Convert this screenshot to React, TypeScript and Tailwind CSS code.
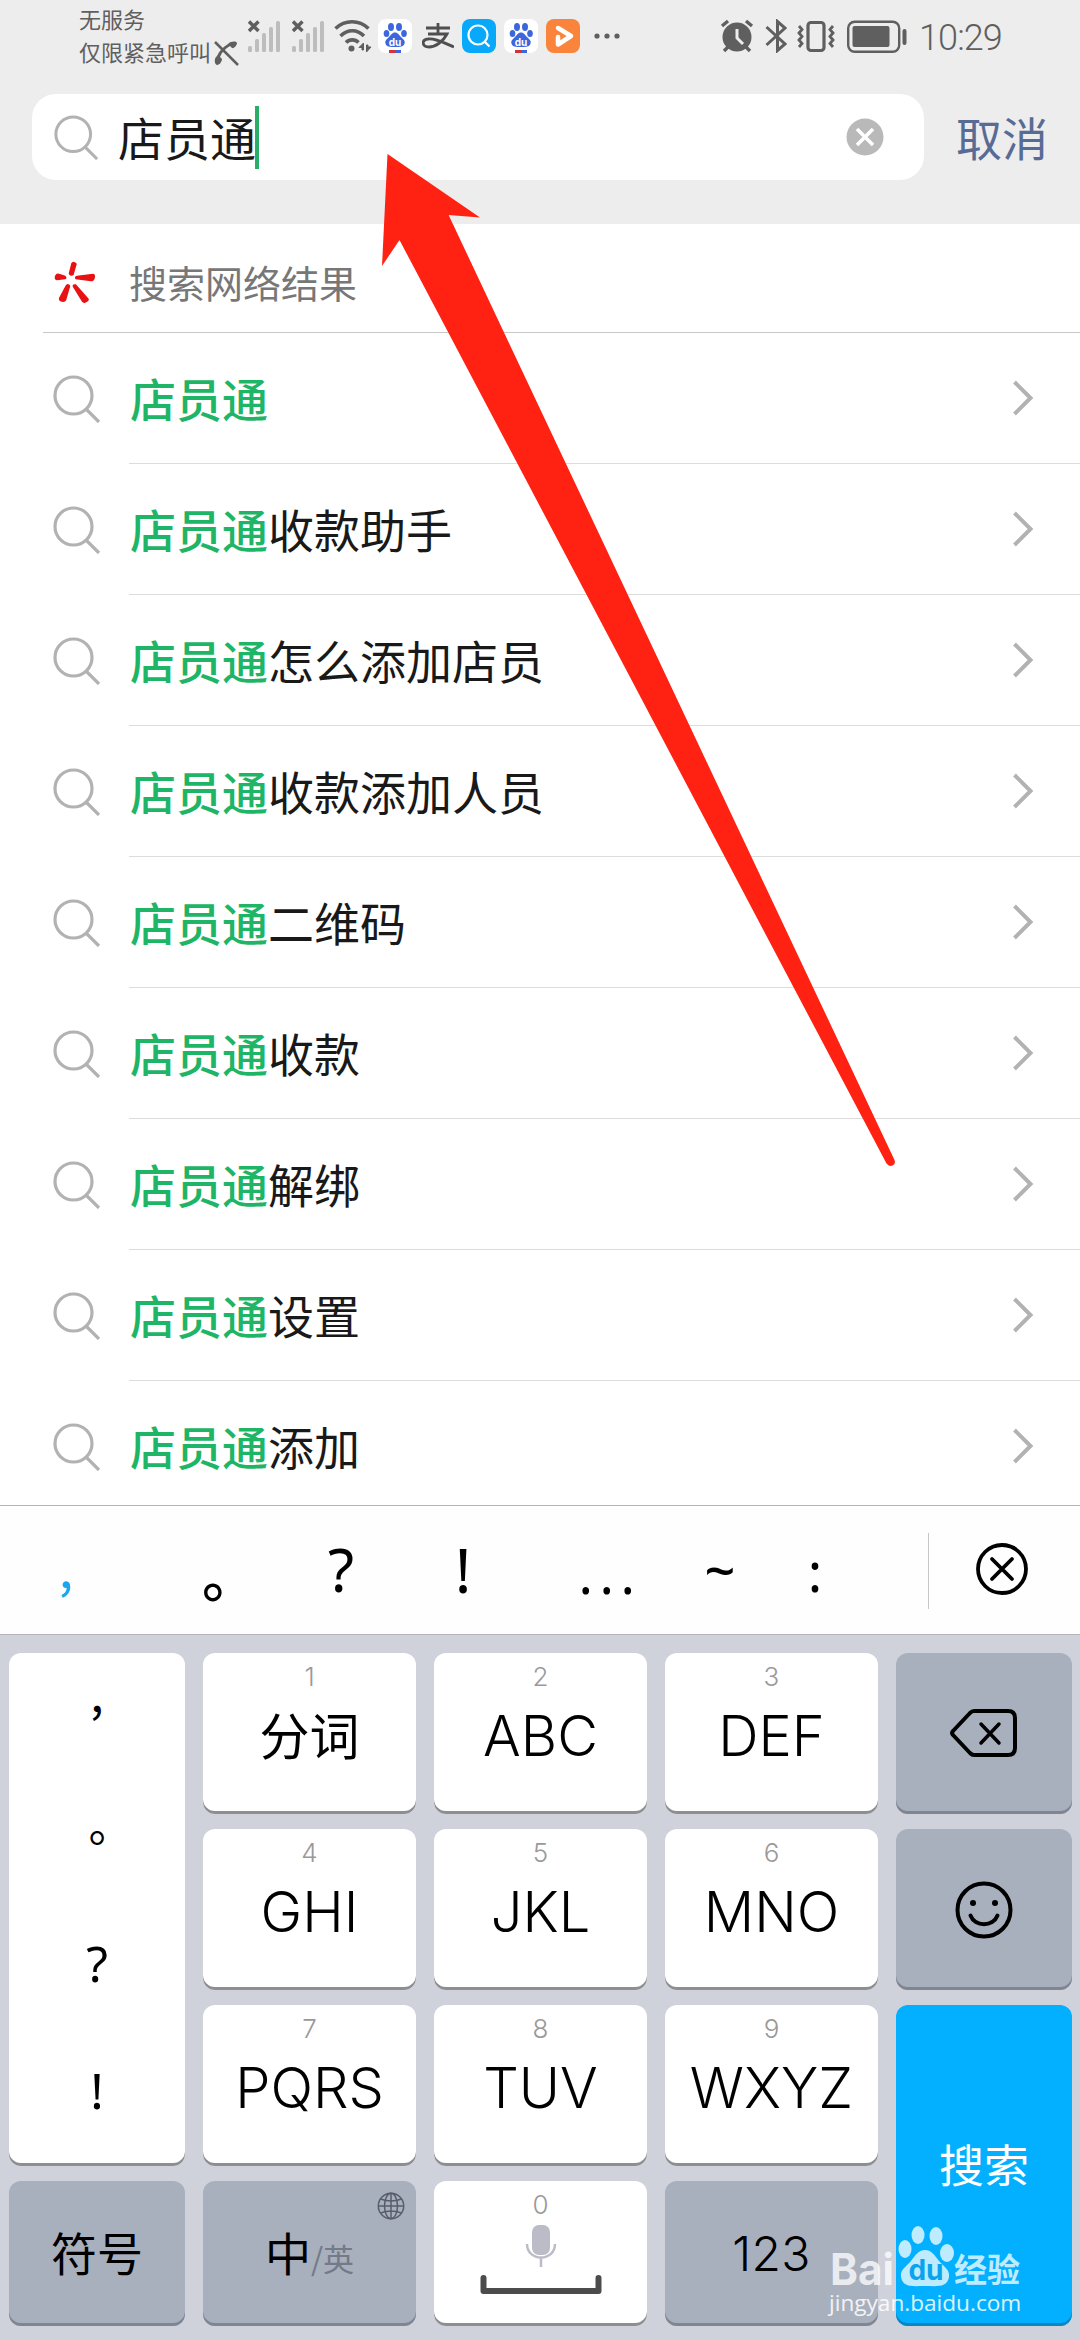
import type { ReactNode } from "react";

const results = [
  "",
  "收款助手",
  "怎么添加店员",
  "收款添加人员",
  "二维码",
  "收款",
  "解绑",
  "设置",
  "添加",
];

function SearchIcon({ className }: { className: string }) {
  return (
    <svg viewBox="0 0 48 48" fill="none" stroke="#b2b2b2" strokeWidth="3.2" className={className}>
      <circle cx="20.5" cy="20.5" r="18.5" />
      <path d="M33 34 46 47" />
    </svg>
  );
}

function Signal() {
  return (
    <svg viewBox="0 0 32 34" className="w-8 h-[34px]">
      <g fill="#bdbdbd">
        <rect x="0" y="27" width="4" height="6" rx="1.5" />
        <rect x="7" y="20" width="4" height="13" rx="1.5" />
        <rect x="14" y="14" width="4" height="19" rx="1.5" />
        <rect x="21" y="8" width="4" height="25" rx="1.5" />
        <rect x="28" y="2" width="4" height="31" rx="1.5" />
      </g>
      <path d="M1 2.500 10.500 12M10.500 2.500 1 12" stroke="#5f5f5f" strokeWidth="3.400" />
    </svg>
  );
}

function BaiduApp() {
  return (
    <svg viewBox="0 0 34 34" className="w-[34px] h-[34px]">
      <rect width="34" height="34" rx="8" fill="#fff" />
      <g fill="#3b66dc">
        <ellipse cx="13" cy="8" rx="3" ry="4" />
        <ellipse cx="21" cy="8" rx="3" ry="4" />
        <ellipse cx="8.500" cy="14.500" rx="2.800" ry="3.600" />
        <ellipse cx="26" cy="14.500" rx="2.800" ry="3.600" />
        <path d="M17 13.500c3 0 4 2.500 6 4.500s4.500 3.500 3.500 6.500c-1 3.500-4.500 3.500-9.500 3.500s-8.500 0-9.500-3.500c-1-3 1.500-4.500 3.500-6.500s3-4.500 6-4.500z" />
      </g>
      <text x="17" y="26.500" textAnchor="middle" fill="#fff" fontSize="10" fontWeight="700" fontFamily="Inter">du</text>
      <rect x="11" y="31" width="6" height="3" fill="#d2333a" />
      <rect x="17" y="31" width="6" height="3" fill="#3b66dc" />
    </svg>
  );
}

function StatusBar() {
  return (
    <div className="h-[94px] flex items-start pl-[79px] text-[#5f5f5f]">
      <div className="w-[134px] mt-[2px] text-[22px] leading-[33px] whitespace-nowrap">
        <p>无服务</p>
        <p>仅限紧急呼叫</p>
      </div>
      <svg viewBox="0 0 26 26" className="w-[26px] h-[26px] mt-10">
        <path d="M2 2 25 25" stroke="#5f5f5f" strokeWidth="2.500" />
        <path d="M15 4c3-3 8-3 9-1 0 2-3 6-5 5l-2-2C12 9 9 12 7 17l2 2c0 2-2 6-5 6-3-1-3-7 0-9C6 11 10 7 15 4z" fill="#5f5f5f" />
      </svg>
      <div className="flex mt-[19px] ml-[9px] gap-3">
        <Signal />
        <Signal />
      </div>
      <svg viewBox="0 0 38 34" className="w-[38px] h-[34px] mt-[19px] ml-[10px]" fill="none" stroke="#5f5f5f" strokeWidth="3.600">
        <path d="M1.500 9.500C11 .500 25 .500 34.500 9.500M6.500 17C13.500 10 23 10 30 17M12 23.500C15.500 20 21 20 24.500 23.500" />
        <circle cx="17.500" cy="29.500" r="3" fill="#5f5f5f" stroke="none" />
        <path d="M25 28.500 29.500 24v7h-1.500v-2.500zM37 28 32.500 33v-7h1.500v2z" strokeWidth="1" fill="#5f5f5f" />
      </svg>
      <div className="flex items-center mt-[19px] ml-[6px]">
        <BaiduApp />
        <svg viewBox="0 0 32 26" className="w-8 h-[26px] ml-[10px]" fill="none" stroke="#4f4f4f" strokeWidth="2.800">
          <path d="M4 5h24M16 0v11M6 11h19C21 19 13 24 7 24c-7 0-8-7-1-8 6-1 14 3 26 8" />
        </svg>
        <svg viewBox="0 0 34 34" className="w-[34px] h-[34px] ml-2">
          <rect width="34" height="34" rx="8" fill="#08a9fb" />
          <g fill="none" stroke="#fff" strokeWidth="2.200">
            <circle cx="16" cy="16" r="9.500" />
            <path d="m22.500 22.500 5 5" />
          </g>
        </svg>
        <div className="ml-2">
          <BaiduApp />
        </div>
        <svg viewBox="0 0 34 34" className="w-[34px] h-[34px] ml-2">
          <rect width="34" height="34" rx="8" fill="#fa843c" />
          <path d="M12 9 25 17 12 25.500V18" fill="none" stroke="#fff" strokeWidth="4.500" strokeLinejoin="round" strokeLinecap="round" />
        </svg>
        <svg viewBox="0 0 26 6" className="w-[26px] h-[6px] ml-[14px]" fill="#5f5f5f">
          <circle cx="3" cy="3" r="2.600" />
          <circle cx="13" cy="3" r="2.600" />
          <circle cx="23" cy="3" r="2.600" />
        </svg>
      </div>
      <svg viewBox="0 0 34 34" className="w-[34px] h-[34px] mt-[19px] ml-[100px]">
        <circle cx="17" cy="18" r="14.500" fill="#5f5f5f" />
        <path d="M2 7 8 2M32 7 26 2M4 32l4-4M30 32l-4-4" stroke="#5f5f5f" strokeWidth="3.400" />
        <path d="M17 10v9l6 6" fill="none" stroke="#ededed" strokeWidth="3" />
      </svg>
      <svg viewBox="0 0 22 34" className="w-[22px] h-[34px] mt-[19px] ml-[11px]" fill="none" stroke="#5f5f5f" strokeWidth="3">
        <path d="M1.500 8 20 25l-7.500 6.500V2.500L20 9 1.500 26" />
      </svg>
      <svg viewBox="0 0 38 34" className="w-[38px] h-[34px] mt-[19px] ml-[10px]" fill="none" stroke="#5f5f5f" strokeWidth="3.200">
        <rect x="11" y="3.500" width="16" height="28" rx="3" />
        <path d="M2 7l3 3.500-3 3.500 3 3.500-3 3.500 3 3.500-3 3.500M36 7l-3 3.500 3 3.500-3 3.500 3 3.500-3 3.500 3 3.500" strokeWidth="2.800" />
      </svg>
      <svg viewBox="0 0 60 34" className="w-[60px] h-[34px] mt-[19px] ml-[12px]">
        <rect x="1.200" y="2.700" width="51" height="30" rx="6.500" fill="none" stroke="#5f5f5f" strokeWidth="2.400" />
        <rect x="5.500" y="7" width="37" height="21" rx="2" fill="#5f5f5f" />
        <rect x="55.500" y="10" width="4" height="16" rx="2" fill="#5f5f5f" />
      </svg>
      <p className="mt-[16px] ml-[12px] font-[Roboto] font-[350] text-[36px] leading-[44px] tracking-[-0.9px]">10:29</p>
    </div>
  );
}

function SearchHeader() {
  return (
    <div className="h-[130px] flex items-start pl-8">
      <div className="w-[892px] h-[86px] rounded-[24px] bg-white flex items-center pl-[22px] pr-[40px]">
        <SearchIcon className="w-[45px] h-[45px]" />
        <p className="ml-[19px] mb-[3px] w-[137px] whitespace-nowrap text-[46px] leading-[60px] text-[#191919]">店员通</p>
        <div className="w-1 h-[63px] bg-[#2aae67]" />
        <svg viewBox="0 0 38 38" className="w-[38px] h-[38px] ml-auto">
          <circle cx="19" cy="19" r="18.500" fill="#b9b9b9" />
          <path d="M11 11 27 27M27 11 11 27" stroke="#fff" strokeWidth="3.600" />
        </svg>
      </div>
      <p className="ml-8 mt-[12px] text-[46px] leading-[60px] text-[#576b95]">取消</p>
    </div>
  );
}

function ResultList() {
  return (
    <div className="h-[1281px] overflow-hidden bg-white">
      <div className="ml-[43px] h-[109px] border-b border-[#c8c8c8] flex items-center pl-[11px]">
        <svg viewBox="0 0 42 42" className="w-[42px] h-[42px] mt-[7px]" stroke="#e81212" strokeLinecap="round" fill="#e81212" strokeWidth="1.500">
          <path d="M18 2.500Q20 .500 22 3L19 13.500Q17 15 15.500 12.500zM2 14.500Q3 12.500 5 13.500L11 15.500Q12.500 17 11 17.500L3 18.500Q.500 18 2 14.500zM22 17.500Q21 16 23 15.500L39 13.500Q41 14 40 17 39.500 19.500 37 19.500zM12.500 24.500Q14.500 23 15.500 25L11.500 39Q10.500 41 6.500 39.500 5 38.500 6 36.500zM19.500 25.500Q19 23.500 21.500 24L34 38Q34.500 40 31 41 29.500 41.500 28.500 40z" />
        </svg>
        <p className="ml-[33px] mt-[8px] text-[38px] leading-[50px] text-[#777]">搜索网络结果</p>
      </div>
      {results.map((rest, i) => (
        <div key={i} className="h-[131px] flex pl-[53px]">
          <SearchIcon className="w-[48px] h-[48px] mt-[42px]" />
          <div className="flex-1 ml-[28px] pl-px pr-[46px] border-b border-[#dcdcdc] flex items-center">
            <p className="mb-[2px] text-[46px] leading-[60px] text-[#191919]">
              <span className="font-medium text-[#1fb567]">店员通</span>
              {rest}
            </p>
            <svg viewBox="0 0 22 36" className="w-[22px] h-9 ml-auto" fill="none" stroke="#b2b2b2" strokeWidth="4">
              <path d="M2.500 2 18.500 18 2.500 34" />
            </svg>
          </div>
        </div>
      ))}
    </div>
  );
}

function Candidates() {
  return (
    <div className="h-[130px] bg-[#fefefe] border-y border-[#b4b4b8] flex text-black text-[54px] leading-[80px] font-['Noto_Sans']">
      <p className="w-[132px] pt-[20px] text-center text-[#1aa7ec] font-['Noto_Sans_CJK_SC'] text-[52px] leading-[80px]">,</p>
      <p className="w-[162px] pt-[27px] pl-[70px] font-['Noto_Sans_CJK_SC'] font-medium text-[56px] leading-[80px]">。</p>
      <p className="w-[94px] pt-[23px] text-center text-[60px] leading-[80px]">?</p>
      <p className="w-[150px] pt-[23px] text-center text-[62px] leading-[80px]">!</p>
      <p className="w-[138px] pt-[27px] pl-[6px] text-center tracking-[6.500px]">...</p>
      <p className="w-[88px] pt-[23px] text-center font-medium">~</p>
      <p className="w-[102px] pt-[25px] text-center">:</p>
      <div className="ml-[62px] mt-[27px] w-px h-[76px] bg-[#c6c6c6]" />
      <svg viewBox="0 0 54 54" className="w-[54px] h-[54px] ml-[46px] mt-[36px]" fill="none" stroke="#000" strokeWidth="3.800" strokeLinecap="round">
        <circle cx="27" cy="27" r="24" />
        <path d="M17 17 37 37M37 17 17 37" />
      </svg>
    </div>
  );
}

function Key({ num, label }: { num: string; label: string }) {
  return (
    <div className="rounded-xl bg-white shadow-[inset_0_-3px_0_#8d8e92] flex flex-col items-center">
      <p className="mt-[8px] font-[Inter] font-light text-[26px] leading-[32px] text-[#999]">{num}</p>
      <p className="mt-[8px] font-[Inter] font-[350] text-[56px] leading-[70px]">{label}</p>
    </div>
  );
}

function DarkKey({ children, className = "" }: { children: ReactNode; className?: string }) {
  return (
    <div className={`rounded-xl bg-[#a8afbd] shadow-[inset_0_-3px_0_#7f8591] flex items-center justify-center ${className}`}>
      {children}
    </div>
  );
}

function Keyboard() {
  return (
    <div className="h-[705px] bg-[#cfd2db] pt-[18px] pl-[9px] text-black">
      <div className="grid grid-cols-[176px_213px_213px_213px_176px] grid-rows-[161px_161px_161px_145px] gap-x-[18px] gap-y-[15px]">
        <div className="row-span-3 rounded-xl bg-white shadow-[inset_0_-3px_0_#8d8e92] flex flex-col items-center text-[44px] leading-[127px] font-['Noto_Sans_CJK_TC']">
          <p className="h-[120px] font-['Noto_Sans_CJK_SC'] text-[48px] leading-[76px]">,</p>
          <p className="h-[127px]">。</p>
          <p className="h-[127px] text-[50px] leading-[127px] font-['Noto_Sans']">?</p>
          <p className="h-[113px] text-[50px] leading-[127px] font-['Noto_Sans']">!</p>
        </div>
        <div className="rounded-xl bg-white shadow-[inset_0_-3px_0_#8d8e92] flex flex-col items-center">
          <p className="mt-[8px] font-[Inter] font-light text-[26px] leading-[32px] text-[#999]">1</p>
          <p className="mt-[5px] text-[50px] leading-[70px]">分词</p>
        </div>
        <Key num="2" label="ABC" />
        <Key num="3" label="DEF" />
        <DarkKey>
          <svg viewBox="0 0 68 50" className="w-[68px] h-[50px]" fill="none" stroke="#000" strokeWidth="4" strokeLinejoin="round" strokeLinecap="round">
            <path d="M24 2h34q7 0 7 7v30q0 7-7 7H24q-2 0-4-2L3 26q-2-2 0-4L20 4q2-2 4-2z" />
            <path d="M31 15 49 34M49 15 31 34" strokeWidth="3.500" />
          </svg>
        </DarkKey>

        <Key num="4" label="GHI" />
        <Key num="5" label="JKL" />
        <Key num="6" label="MNO" />
        <DarkKey>
          <svg viewBox="0 0 58 58" className="w-[58px] h-[58px]" fill="none" stroke="#000" strokeWidth="4">
            <circle cx="29" cy="29" r="26.500" />
            <path d="M15.500 34.500C20 46 38 46 42.500 34.500" strokeLinecap="round" />
            <circle cx="18" cy="22" r="3" fill="#000" stroke="none" />
            <circle cx="40" cy="22" r="3" fill="#000" stroke="none" />
          </svg>
        </DarkKey>

        <Key num="7" label="PQRS" />
        <Key num="8" label="TUV" />
        <Key num="9" label="WXYZ" />
        <div className="row-span-2 rounded-xl bg-[#02b0ff] shadow-[inset_0_-3px_0_#0a86c0] flex justify-center pt-[127px] text-[45px] leading-[64px] text-white">
          搜索
        </div>

        <DarkKey>
          <p className="mb-[4px] text-[46px]">符号</p>
        </DarkKey>
        <DarkKey className="relative">
          <p className="mb-[4px] text-[46px]">
            中<span className="text-[31px] text-[#747a87]">/英</span>
          </p>
          <svg viewBox="0 0 28 28" className="absolute top-[11px] right-[11px] w-7 h-7" fill="none" stroke="#585d69" strokeWidth="1.500">
            <circle cx="14" cy="14" r="12.700" />
            <ellipse cx="14" cy="14" rx="6.500" ry="12.700" />
            <path d="M14 1v26M1 14h26M3.500 7q10.500 4 21 0M3.500 21q10.500-4 21 0" />
          </svg>
        </DarkKey>
        <div className="rounded-xl bg-white shadow-[inset_0_-3px_0_#8d8e92] flex flex-col items-center">
          <p className="mt-[8px] font-[Inter] font-light text-[26px] leading-[32px] text-[#999]">0</p>
          <svg viewBox="0 0 122 70" className="w-[122px] h-[70px] mt-[3px]" fill="none">
            <rect x="52" y="1" width="18" height="30" rx="7" fill="#bcbcc8" />
            <path d="M47 20c0 18 28 18 28 0M61 34v9" stroke="#bcbcc8" strokeWidth="2.500" />
            <path d="M3.500 54v13h115V54" stroke="#4c4c4c" strokeWidth="6" strokeLinecap="round" strokeLinejoin="round" />
          </svg>
        </div>
        <DarkKey>
          <p className="font-[Inter] text-[48px] font-[350] tracking-[0.3px]">123</p>
        </DarkKey>
      </div>
    </div>
  );
}

function Watermark() {
  return (
    <div className="absolute left-[829px] top-[2224px] text-white/75">
      <svg viewBox="0 0 194 64" className="w-[194px] h-16 overflow-visible" fill="currentColor">
        <text x="1" y="61" fontSize="44" fontWeight="700" fontFamily="Inter" textLength="64" lengthAdjust="spacingAndGlyphs">Bai</text>
        <ellipse cx="89" cy="11" rx="6.500" ry="9" />
        <ellipse cx="107" cy="12" rx="6.500" ry="9" />
        <ellipse cx="76" cy="25" rx="6.500" ry="9" />
        <ellipse cx="118" cy="29" rx="7" ry="9" />
        <path d="M96 26c7 0 10 6 14 11s11 8 10 16c-2 11-12 9-24 9s-22 2-24-9c-1-8 6-11 10-16s7-11 14-11z" />
        <text x="97" y="56" textAnchor="middle" fontSize="28" fontWeight="700" fontFamily="Inter" fill="#08a4ed">du</text>
        <text x="125" y="58" fontSize="33" fontWeight="700" fontFamily="Noto Sans CJK SC">经验</text>
      </svg>
      <p className="font-['Open_Sans'] text-[22.600px] leading-[30px] text-white/85">jingyan.baidu.com</p>
    </div>
  );
}

export default function App() {
  return (
    <div className="relative w-[1080px] h-[2340px] overflow-hidden bg-[#ededed] font-['Noto_Sans_CJK_SC',sans-serif]">
      <StatusBar />
      <SearchHeader />
      <ResultList />
      <Candidates />
      <Keyboard />
      <Watermark />

      {/* Pointer arrow */}
      <svg viewBox="0 0 1080 2340" className="absolute inset-0 w-[1080px] h-[2340px] pointer-events-none">
        <path d="M387.500 154 480 217.500 448.600 215 894.500 1160Q896 1164 892.500 1165.500 889 1167 886.500 1163.500L399.500 240 382 266z" fill="#ff2112" />
      </svg>
    </div>
  );
}
